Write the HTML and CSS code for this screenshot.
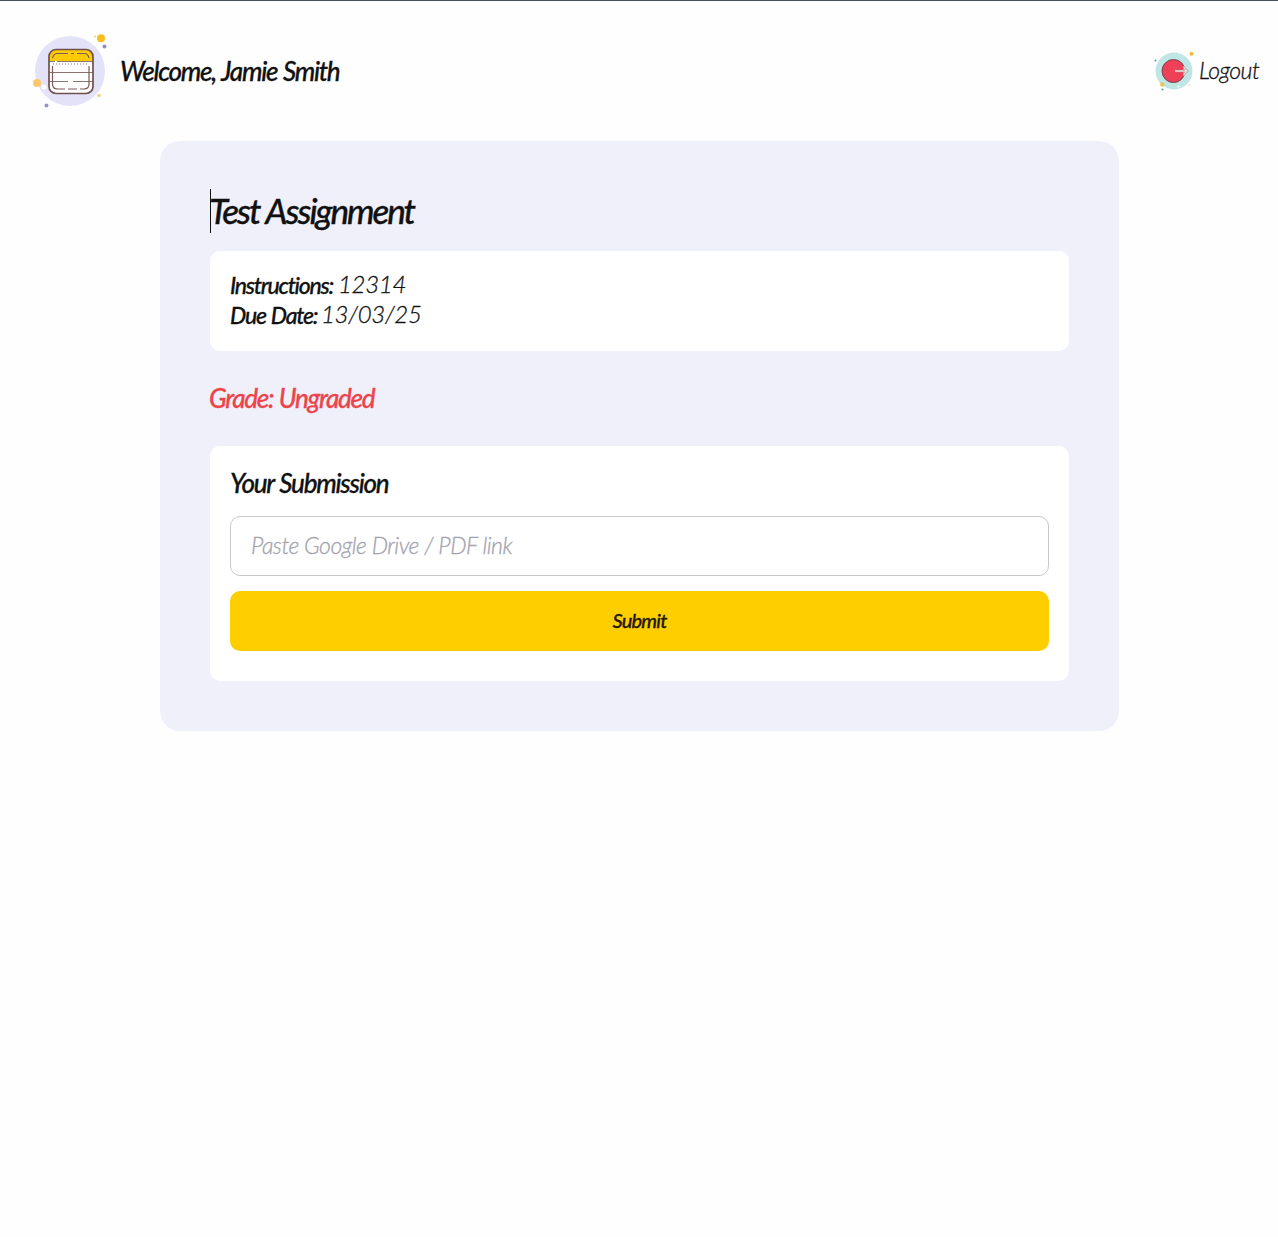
FILE: index.html
```html
<!DOCTYPE html>
<html lang="en">
<head>
<meta charset="utf-8">
<title>Test Assignment</title>
<link rel="stylesheet" href="styles.css">
</head>
<body>
<header class="topbar">
  <div class="brand">
    <svg class="brand-icon" viewBox="0 0 80 80" aria-hidden="true">
      <circle cx="40" cy="40" r="35" fill="#e3e2f9"/>
      <circle cx="71" cy="7.200" r="4" fill="#f9bd1c"/><circle cx="65" cy="5.500" r="1" fill="#f9cf72"/>
      <circle cx="74.500" cy="15.500" r="2" fill="#8f8fc1"/>
      <circle cx="7" cy="52" r="4" fill="#fcc66b"/><circle cx="16.500" cy="74.500" r="2" fill="#9494c5"/>
      <circle cx="69" cy="64.500" r="1.700" fill="#fccb79"/><circle cx="14" cy="56" r="2.500" fill="#fff"/>
      <rect x="19" y="18.500" width="44" height="44" rx="7" fill="#fff"/>
      <path d="M19 30v-4.500a7 7 0 0 1 7-7h30a7 7 0 0 1 7 7V30z" fill="#fdcb06"/>
      <path d="M19 30.500h44M19 41.500h44M19 50.500h20m3 0h21" fill="none" stroke="#8c7472" stroke-width="1"/>
      <path d="M23 33h36" stroke="#8c7472" stroke-width="1.200" stroke-dasharray="1 2"/>
      <path d="M22.500 27q1-4.500 5-4.500H38m3 0h3m3 0h7q4 0 5 4.500M22.500 35v18q0 5 5 5H35m3 0h9m3 0h4q5 0 5-5V35" fill="none" stroke="#7c5b57" stroke-width="1.200"/>
      <rect x="19" y="18.500" width="44" height="44" rx="7" fill="none" stroke="#70504e" stroke-width="1.700"/>
      <path d="M38 50.500h5M25 30.500h2" stroke="#fff" stroke-width="1.500"/>
    </svg>
    <span class="welcome">Welcome, Jamie Smith</span>
  </div>
  <a class="logout">
    <svg class="logout-icon" viewBox="0 0 40 40" aria-hidden="true">
      <circle cx="20" cy="20" r="18.500" fill="#bfe5e4"/>
      <circle cx="37.500" cy="2.700" r="2" fill="#efbd35"/><circle cx="1.500" cy="9.500" r="1" fill="#5995a8"/>
      <circle cx="8.300" cy="33.500" r="2.200" fill="#efc352"/><circle cx="8.500" cy="38.500" r="1.100" fill="#43a4bd"/>
      <circle cx="35" cy="34" r=".8" fill="#e6cf83"/><circle cx="24.500" cy="35.500" r="1" fill="#fff"/>
      <circle cx="19.500" cy="20" r="11.500" fill="#ef4057" stroke="#724650"/>
      <path d="M29.500 14.500l5 5.500-5 5.500z" fill="#d6eeee"/>
      <path d="M21 20h11m-2-3 3 3-3 3" fill="none" stroke="#9d7f80" stroke-width="2.400"/>
      <path d="M21 20h11m-2-3 3 3-3 3" fill="none" stroke="#f1ded7" stroke-width="1.400"/>
    </svg>
    <span class="logout-label">Logout</span>
  </a>
</header>
<main class="card">
  <h1 class="title"><span class="title-text">Test Assignment</span></h1>
  <section class="panel details">
    <p><strong class="instructions-label">Instructions: </strong><span class="value">12314</span></p>
    <p><strong class="due-label">Due Date: </strong><span class="value">13/03/25</span></p>
  </section>
  <p class="grade">Grade: Ungraded</p>
  <section class="panel submission">
    <h2 class="subtitle">Your Submission</h2>
    <input class="link-input" type="text" placeholder="Paste Google Drive / PDF link">
    <button class="submit" type="button">Submit</button>
  </section>
</main>
</body>
</html>
```
FILE: styles.css
```css
* { box-sizing: border-box; }
body { margin: 0; min-height: 100vh; border-top: 1px solid #46515c; background: #fefefe; color: #111; font-family: Lato, "Open Sans", sans-serif; font-style: italic; }
h1, h2, p { margin: 0; }
.topbar { height: 140px; padding: 0 18px 0 30px; display: flex; align-items: center; justify-content: space-between; }
.brand { display: flex; align-items: center; gap: 10px; }
.brand-icon { width: 80px; height: 80px; }
.welcome, .title, .details strong, .grade, .subtitle, .submit { -webkit-text-stroke: .3px currentColor; }
.logout-label, .value, .link-input { -webkit-text-stroke: .3px currentColor; }
.welcome { font-size: 26px; font-weight: 500; letter-spacing: -1.25px; word-spacing: 1px; white-space: nowrap; }
.logout { display: flex; align-items: center; gap: 5px; }
.logout-icon { width: 40px; height: 40px; }
.logout-label { width: 61px; padding-bottom: 3px; font-size: 23px; font-weight: 300; letter-spacing: -.5px; white-space: nowrap; }
.card { width: 959px; height: 590px; margin: 0 auto 0 160px; padding: 50px; border-radius: 20px; background: #f0f0fb; }
.title { height: 44px; margin-top: -2px; border-left: 1px solid #111; font-size: 35px; line-height: 42px; font-weight: 500; letter-spacing: -2.1px; word-spacing: 1px; white-space: nowrap; }
.title-text { margin-left: -2px; }
.panel { border-radius: 10px; background: #fff; padding: 20px; }
.details { height: 100px; margin-top: 18px; padding-top: 19px; font-size: 24px; line-height: 30px; }
.details p { display: flex; white-space: nowrap; }
.details strong { font-size: 23px; font-weight: 500; letter-spacing: -1.25px; word-spacing: 1px; }
.instructions-label { width: 108px; }
.due-label { width: 91px; }
.value { font-weight: 300; letter-spacing: -.3px; position: relative; top: -1px; }
.grade { height: 95px; margin-left: -1px; line-height: 95px; color: #ed444a; font-size: 26px; font-weight: 500; letter-spacing: -1.3px; word-spacing: 1px; }
.submission { height: 235px; display: flex; flex-direction: column; }
.subtitle { height: 50px; line-height: 35px; font-size: 26px; font-weight: 500; letter-spacing: -1.25px; word-spacing: 1px; }
.link-input { height: 60px; width: 100%; padding: 0 20px 2px; border: 1px solid #c8c8cc; border-radius: 10px; background: #fff; font: italic 300 23px Lato, sans-serif; letter-spacing: -.5px; outline: 0; }
.link-input::placeholder { color: #a3a3ae; opacity: 1; }
.submit { height: 60px; margin-top: 15px; padding-bottom: 4px; border: 0; border-radius: 10px; background: #ffce00; color: #211703; font: italic 500 20px Lato, sans-serif; letter-spacing: -.8px; }
```
